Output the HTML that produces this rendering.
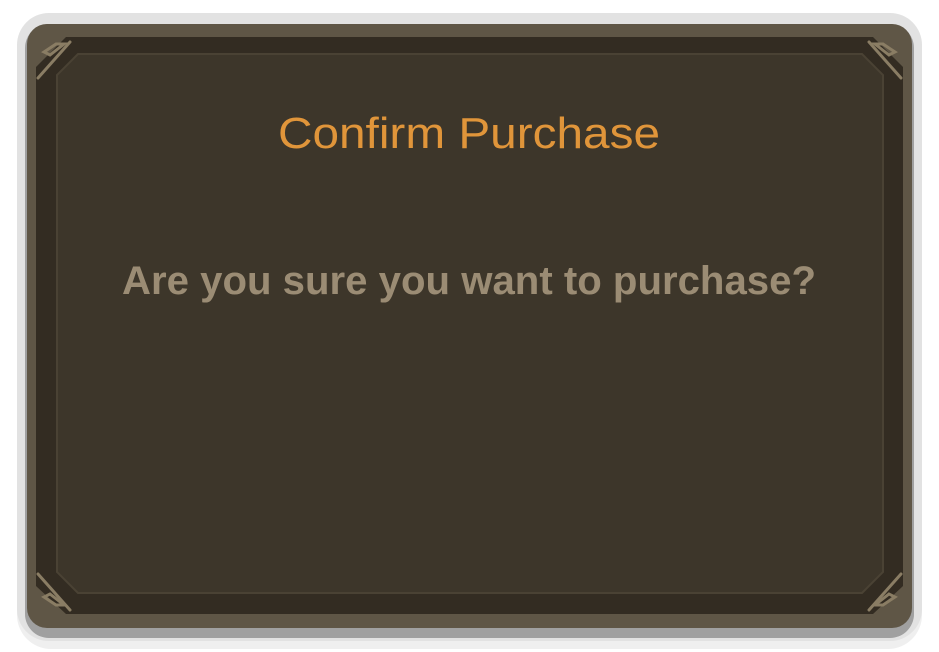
<!DOCTYPE html>
<html><head><meta charset="utf-8"><style>
html,body{margin:0;padding:0;background:#fff;width:939px;height:652px;overflow:hidden}
</style></head><body>
<svg width="939" height="652" viewBox="0 0 939 652" xmlns="http://www.w3.org/2000/svg">
<rect x="17" y="17" width="905" height="632" rx="34" fill="#efefef"/>
<rect x="17" y="13" width="905" height="628" rx="32" fill="#e2e2e2"/>
<rect x="25" y="24" width="889" height="614" rx="24" fill="#a0a0a0"/>
<rect x="27" y="24" width="885" height="604" rx="20" fill="#5f5646"/>
<path d="M66 37 L873 37 L903 67 L903 586 L873 614 L66 614 L36 586 L36 67 Z" fill="#332c22"/>
<path d="M78 54 L862 54 L883 75 L883 572 L862 593 L78 593 L57 572 L57 75 Z" fill="#3d362a" stroke="#4a4234" stroke-width="2"/>
<g stroke="#8a7d64" stroke-width="3" fill="none" stroke-linecap="round">
<path d="M44 52 L56 44 L64 44 L50 55 Z"/><path d="M38 78 L70 42"/>
<path d="M895 52 L883 44 L875 44 L889 55 Z"/><path d="M901 78 L869 42"/>
<path d="M44 597 L56 605 L64 605 L50 594 Z"/><path d="M38 574 L70 610"/>
<path d="M895 597 L883 605 L875 605 L889 594 Z"/><path d="M901 574 L869 610"/>
</g>
<text x="469" y="148" text-anchor="middle" font-family="Liberation Sans, sans-serif" font-size="44" fill="#e0953a" textLength="382" lengthAdjust="spacingAndGlyphs">Confirm Purchase</text>
<text x="469" y="294" text-anchor="middle" font-family="Liberation Sans, sans-serif" font-weight="bold" font-size="40" fill="#9b8c74" textLength="694" lengthAdjust="spacingAndGlyphs">Are you sure you want to purchase?</text>
</svg>
</body></html>
